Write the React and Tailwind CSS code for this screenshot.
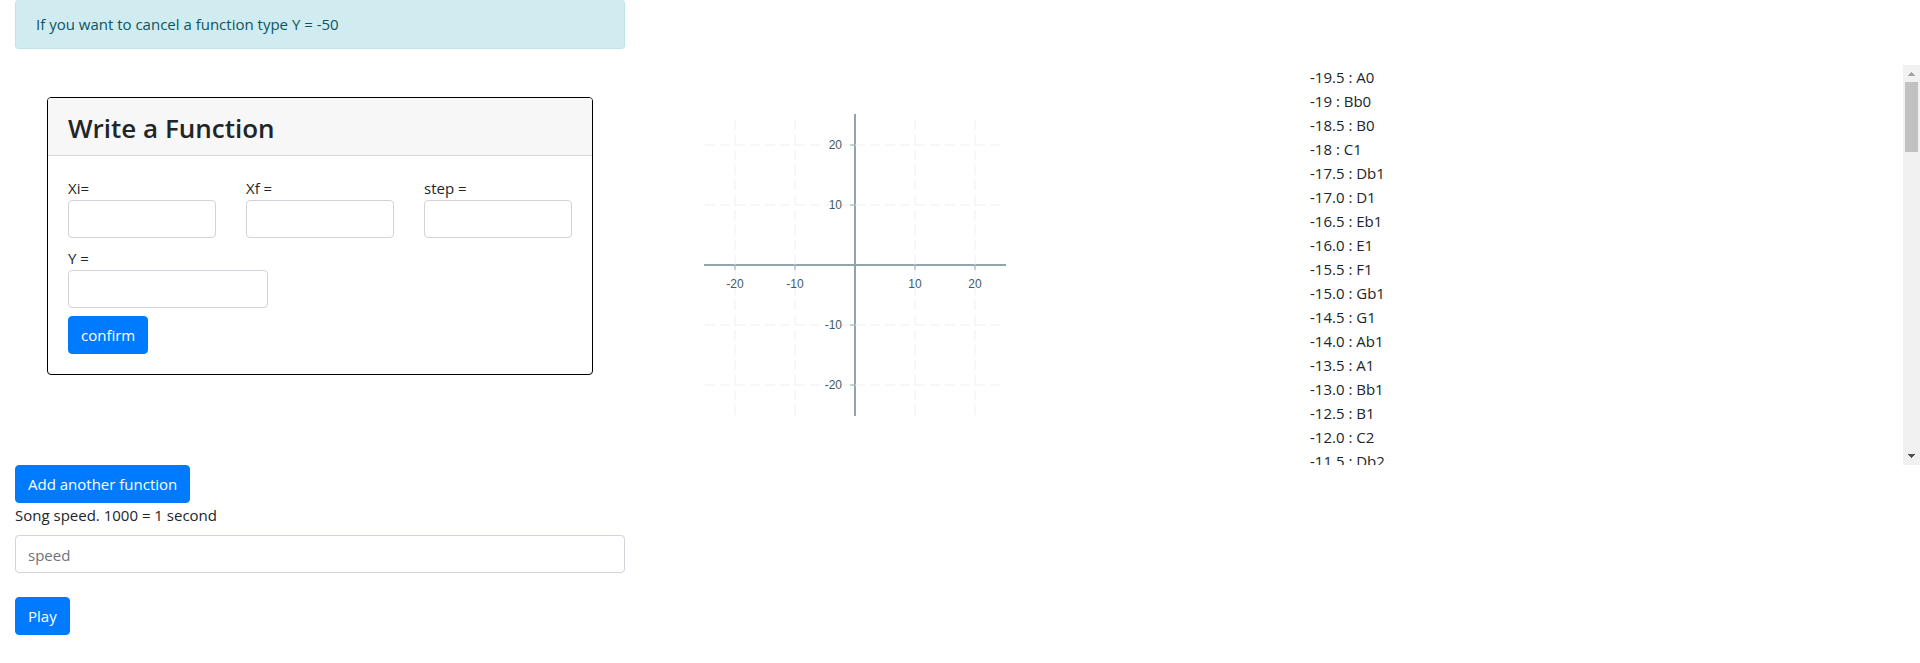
const notes = [
  '-19.5 : A0', '-19 : Bb0', '-18.5 : B0', '-18 : C1', '-17.5 : Db1', '-17.0 : D1',
  '-16.5 : Eb1', '-16.0 : E1', '-15.5 : F1', '-15.0 : Gb1', '-14.5 : G1', '-14.0 : Ab1',
  '-13.5 : A1', '-13.0 : Bb1', '-12.5 : B1', '-12.0 : C2', '-11.5 : Db2',
];

const ticks = [-20, -10, 10, 20];

const inputClass =
  'block h-[38px] w-full rounded border border-[#ced4da] bg-white px-3 pt-0.5 text-[15px] text-[#495057] placeholder:text-[#6c757d]';

function Button({ children }) {
  return (
    <button
      type="button"
      className="block h-[38px] w-fit rounded border border-[#007bff] bg-[#007bff] px-3 text-[15px] leading-6 text-white"
    >
      {children}
    </button>
  );
}

function Field({ id, label, className = '' }) {
  return (
    <div className={className}>
      <label htmlFor={id} className="block leading-6">{label}</label>
      <input id={id} type="text" className={inputClass} />
    </div>
  );
}

function FunctionCard() {
  return (
    <section className="overflow-hidden rounded border border-black bg-white">
      <h3 className="border-b border-[#d8d8d8] bg-[#f7f7f7] px-5 pb-[10px] pt-[13px] text-[26px] font-semibold leading-[34px]">
        Write a Function
      </h3>
      <form className="flex flex-col gap-2 p-5">
        <div className="grid grid-cols-3 gap-[30px]">
          <Field id="xi" label="Xi=" />
          <Field id="xf" label="Xf =" />
          <Field id="step" label="step =" />
        </div>
        <Field id="y" label="Y =" className="w-[200px]" />
        <Button>confirm</Button>
      </form>
    </section>
  );
}

function Plot() {
  return (
    <svg viewBox="0 0 400 400" className="size-[400px]" role="img" aria-label="Function plot">
      <path d="M49 200H351M200 49V351" stroke="#90A4AE" strokeWidth="2" />
      {ticks.map((t) => {
        const x = 200 + t * 6;
        const y = 200 - t * 6;
        return (
          <g key={t} fontFamily="'Liberation Sans', Arial, sans-serif" fontSize="12" fill="#455A64">
            <path d={`M${x} 350V50M50 ${y}H350`} stroke="#ECEFF1" strokeDasharray="10 5" fill="none" />
            <path d={`M${x} 200v5M200 ${y}h-5`} stroke="#90A4AE" />
            <text x={x} y="223" textAnchor="middle">{t}</text>
            <text x="187" y={y + 4} textAnchor="end">{t}</text>
          </g>
        );
      })}
    </svg>
  );
}

function Scrollbar() {
  return (
    <div aria-hidden="true" className="flex w-[17px] shrink-0 flex-col items-center bg-[#f1f1f1]">
      <svg viewBox="0 0 17 17" className="size-[17px]" shapeRendering="crispEdges">
        <path d="M8 7h1v1h1v1h1v1h1v1H5v-1h1V9h1V8h1z" fill="#a3a3a3" />
      </svg>
      <div className="h-[70px] w-[13px] bg-[#c1c1c1]" />
      <svg viewBox="0 0 17 17" className="mt-auto size-[17px]" shapeRendering="crispEdges">
        <path d="M5 6h7v1h-1v1h-1v1H9v1H8V9H7V8H6V7H5z" fill="#505050" />
      </svg>
    </div>
  );
}

export default function App() {
  return (
    <main className="bg-white font-['Open_Sans','Noto_Sans',sans-serif] text-[15px] leading-6 text-[#212529]">
      <div className="grid grid-cols-3">
        <div className="px-[15px]">
          <div role="alert" className="rounded border border-t-0 border-[#bee5eb] bg-[#d1ecf1] px-5 py-3 text-[#0c5460]">
            If you want to cancel a function type Y = -50
          </div>
        </div>
      </div>
      <div className="mt-4 grid grid-cols-3">
        <div className="px-[47px] py-8">
          <FunctionCard />
        </div>
        <div className="px-[15px]">
          <Plot />
        </div>
        <div className="flex h-[400px]">
          <ul className="flex-1 overflow-y-auto pl-[30px] [scrollbar-width:none]">
            {notes.map((note) => (
              <li key={note}>{note}</li>
            ))}
          </ul>
          <Scrollbar />
        </div>
      </div>
      <div className="grid grid-cols-3">
        <div className="px-[15px]">
          <Button>Add another function</Button>
          <label htmlFor="speed" className="mb-2 block">Song speed. 1000 = 1 second</label>
          <input id="speed" type="text" placeholder="speed" className={inputClass} />
          <div className="mt-6">
            <Button>Play</Button>
          </div>
        </div>
      </div>
    </main>
  );
}
